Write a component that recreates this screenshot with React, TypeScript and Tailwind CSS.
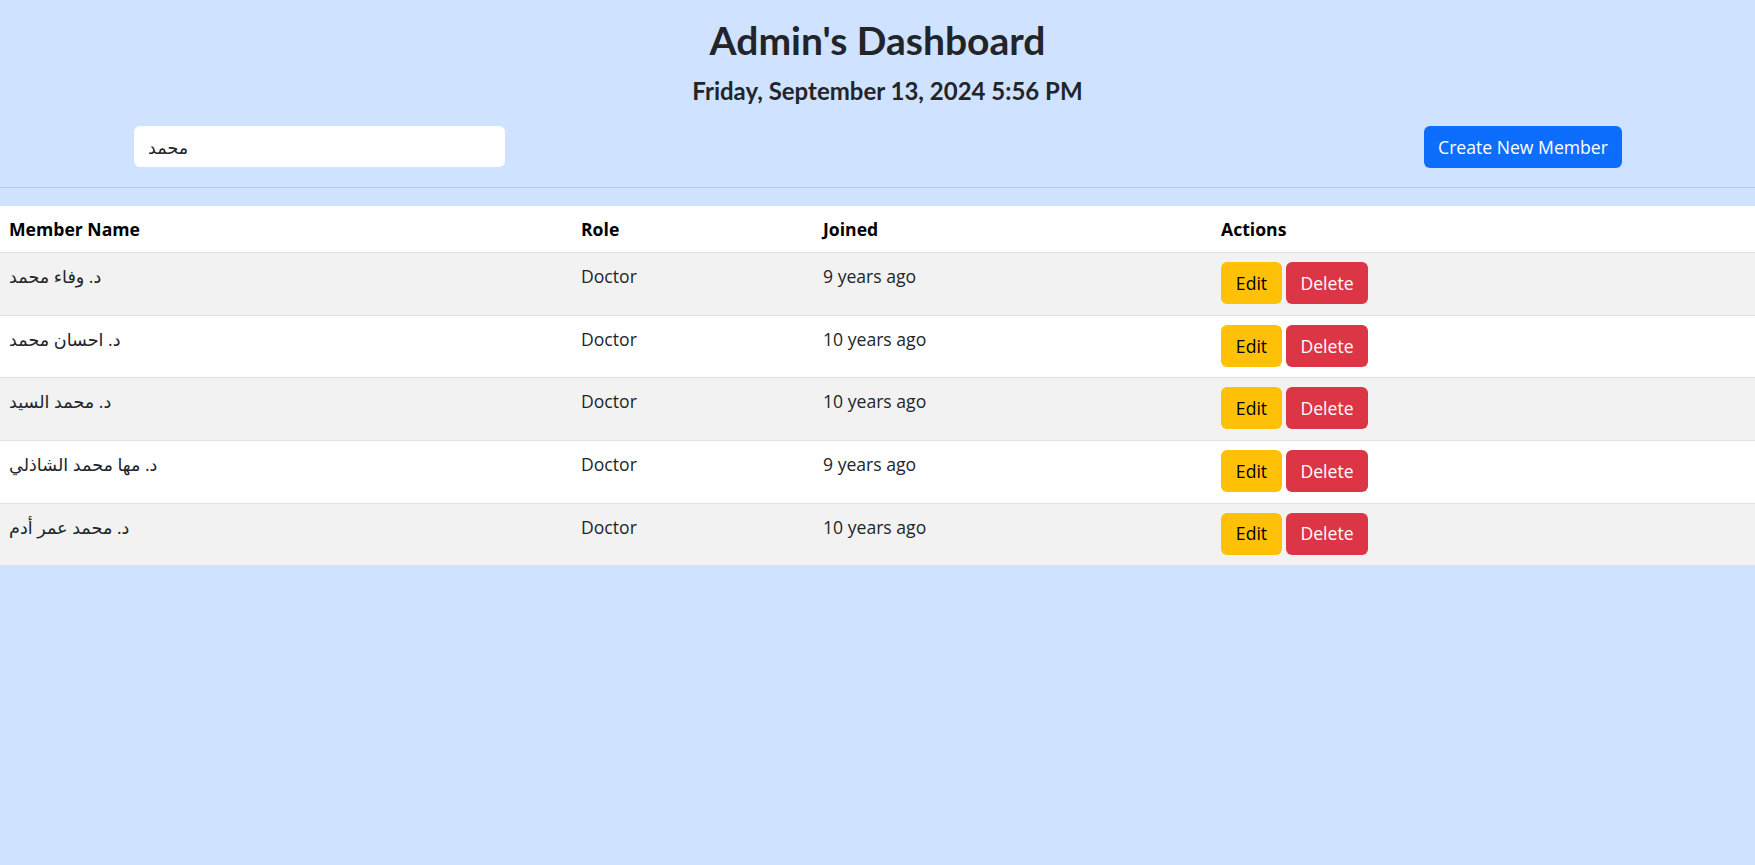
import React from 'react'

const MEMBERS = [
  { name: 'د. وفاء محمد', role: 'Doctor', joined: '9 years ago' },
  { name: 'د. احسان محمد', role: 'Doctor', joined: '10 years ago' },
  { name: 'د. محمد السيد', role: 'Doctor', joined: '10 years ago' },
  { name: 'د. مها محمد الشاذلي', role: 'Doctor', joined: '9 years ago' },
  { name: 'د. محمد عمر أدم', role: 'Doctor', joined: '10 years ago' },
]

export default function App() {
  return (
    <div className="min-h-screen bg-[#cfe2ff] font-['Open_Sans','Noto_Sans','DejaVu_Sans',sans-serif] text-[#212529]">
      {/* Top header: title, date, search and create */}
      <header className="border-b border-[#b9c9e2] pb-[19px]">
        <h1 className="pt-[17px] text-center font-['Lato',sans-serif] text-[39px] font-bold leading-[1.23]">
          Admin's Dashboard
        </h1>
        <h4 className="mt-[12px] pl-[20px] text-center font-['Lato',sans-serif] text-[24px] font-bold leading-[1.2]">
          Friday, September 13, 2024 5:56 PM
        </h4>
        <div className="mt-[20px] flex items-center justify-between pl-[134px] pr-[133px]">
          <input
            value="محمد"
            readOnly
            className="h-[41px] w-[371px] rounded-[6px] bg-white px-[14px] text-[17.6px] outline-none"
          />
          <button className="h-[42px] w-[198px] rounded-[6px] bg-[#0d6efd] text-[17.6px] text-white">
            Create New Member
          </button>
        </div>
      </header>

      <div className="pt-[18px]">
        <table className="w-full border-collapse bg-white text-left text-[17.6px]">
          <thead>
            <tr className="h-[47px] border-b border-[#dee2e6]">
              <th className="w-[572px] px-[9px] font-bold text-black">Member Name</th>
              <th className="w-[242px] px-[9px] font-bold text-black">Role</th>
              <th className="w-[398px] px-[9px] font-bold text-black">Joined</th>
              <th className="px-[9px] font-bold text-black">Actions</th>
            </tr>
          </thead>
          <tbody>
            {MEMBERS.map((m, i) => (
              <tr
                key={i}
                className={`h-[62.6px] border-b border-[#dee2e6] ${i % 2 === 0 ? 'bg-[#f2f2f2]' : 'bg-white'}`}
              >
                <td className="px-[9px] pt-[10px] align-top leading-[26px]">{m.name}</td>
                <td className="px-[9px] pt-[10px] align-top leading-[26px]">{m.role}</td>
                <td className="px-[9px] pt-[10px] align-top leading-[26px]">{m.joined}</td>
                <td className="px-[9px] pt-[9px] align-top">
                  <div className="flex gap-[4px]">
                    <button className="h-[42px] w-[61px] rounded-[6px] bg-[#ffc107] text-black">Edit</button>
                    <button className="h-[42px] w-[82px] rounded-[6px] bg-[#dc3545] text-white">Delete</button>
                  </div>
                </td>
              </tr>
            ))}
          </tbody>
        </table>
      </div>
    </div>
  )
}
